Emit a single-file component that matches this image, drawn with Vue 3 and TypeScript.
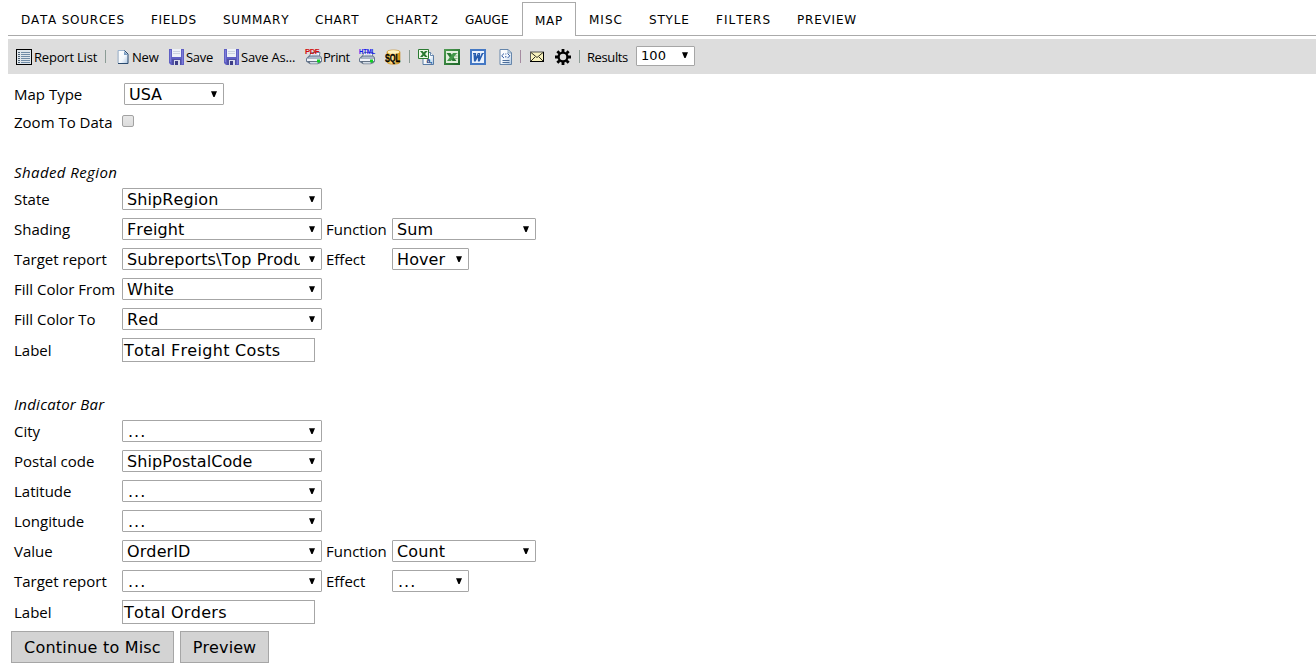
<script setup lang="ts">
interface Field {
  label: string
  value: string
  kind?: 'input'
  extra?: { label: string; value: string; narrow?: boolean }
}

const tabs: { name: string; width: number; spacing: number }[] = [
  { name: 'DATA SOURCES', width: 130, spacing: 0.77 },
  { name: 'FIELDS', width: 72, spacing: 0.7 },
  { name: 'SUMMARY', width: 92, spacing: 0.75 },
  { name: 'CHART', width: 71, spacing: 0.6 },
  { name: 'CHART2', width: 79, spacing: 0.7 },
  { name: 'GAUGE', width: 70, spacing: 0.1 },
  { name: 'MAP', width: 54, spacing: 0.7 },
  { name: 'MISC', width: 60, spacing: 1 },
  { name: 'STYLE', width: 67, spacing: 0.8 },
  { name: 'FILTERS', width: 81, spacing: 1 },
  { name: 'PREVIEW', width: 86, spacing: 0.8 },
]
const activeTab = 'MAP'

const shaded: Field[] = [
  { label: 'State', value: 'ShipRegion' },
  { label: 'Shading', value: 'Freight', extra: { label: 'Function', value: 'Sum' } },
  { label: 'Target report', value: 'Subreports\\Top Products', extra: { label: 'Effect', value: 'Hover', narrow: true } },
  { label: 'Fill Color From', value: 'White' },
  { label: 'Fill Color To', value: 'Red' },
  { label: 'Label', value: 'Total Freight Costs', kind: 'input' },
]
const indicator: Field[] = [
  { label: 'City', value: '...' },
  { label: 'Postal code', value: 'ShipPostalCode' },
  { label: 'Latitude', value: '...' },
  { label: 'Longitude', value: '...' },
  { label: 'Value', value: 'OrderID', extra: { label: 'Function', value: 'Count' } },
  { label: 'Target report', value: '...', extra: { label: 'Effect', value: '...', narrow: true } },
  { label: 'Label', value: 'Total Orders', kind: 'input' },
]
const sections = [
  { title: 'Shaded Region', fields: shaded },
  { title: 'Indicator Bar', fields: indicator },
]
</script>

<template>
  <div class="page">
    <svg class="defs" width="0" height="0" aria-hidden="true">
      <defs>
        <linearGradient id="paper" x1="0" y1="0" x2="1" y2="1">
          <stop offset="0" stop-color="#fff" /><stop offset=".55" stop-color="#f3f8fd" /><stop offset="1" stop-color="#a9c3df" />
        </linearGradient>
        <linearGradient id="gold" x1="0" x2="1">
          <stop offset="0" stop-color="#e8a81c" /><stop offset=".4" stop-color="#ffe9a0" /><stop offset="1" stop-color="#d58a00" />
        </linearGradient>
        <linearGradient id="green" x1="0" x2="1" y2="1">
          <stop offset="0" stop-color="#4d9a50" /><stop offset="1" stop-color="#1e692a" />
        </linearGradient>
        <symbol id="floppy" viewBox="0 0 16 16">
          <path d="M0 0h15v16H2l-2-2z" fill="#5f5fc4" />
          <path d="M1 1h1v12H1zM13 1h1v14h-1z" fill="#7d7dd8" />
          <path d="M3 0h9v8H3z" fill="#eef1f7" />
          <path d="M4 2h7v1H4zM4 4h7v1H4z" fill="#cbd1df" />
          <path d="M3 10h9v6H3z" fill="#5050a4" />
          <path d="M5 11h6v5H5z" fill="#d9dcec" />
          <path d="M6 12h3v4H6z" fill="#3d3d86" />
        </symbol>
        <symbol id="printer" viewBox="0 0 16 16">
          <path d="M5 4h9l-1 5H3z" fill="#f6f9fd" stroke="#62758f" stroke-width=".9" />
          <path d="M6 6.5h6" stroke="#adb9c9" stroke-width=".7" />
          <path d="M0 10l3-3h11l2 2v4l-2 2H3l-3-2z" fill="#66788f" />
          <path d="M2 9.5L4 8h10l1 1.5z" fill="#aebccd" />
          <path d="M1 10h14v2.5H1z" fill="#f0f3f8" />
          <path d="M3 13h10l-1 2.5H4z" fill="#d5dee8" stroke="#4c5a6d" stroke-width=".7" />
          <path d="M11 11h3v3h-3z" fill="#13ce25" />
        </symbol>
        <symbol id="arrow" viewBox="0 0 6 6">
          <path d="M0 .2h6L3.6 6H2.4z" fill="#000" />
        </symbol>
      </defs>
    </svg>

    <nav class="tabs">
      <a
        v-for="t in tabs" :key="t.name" class="tab" :class="{ active: t.name === activeTab }"
        :style="{ width: t.width + 'px', letterSpacing: t.spacing + 'px' }"
      >{{ t.name }}</a>
    </nav>

    <div class="toolbar">
      <div class="tool report">
        <svg width="16" height="16" viewBox="0 0 16 16">
          <rect x=".5" y=".5" width="15" height="15" fill="#dfe6ec" stroke="#000" />
          <path d="M2 3h2v1H2zM2 5h2v1H2zM2 7h2v1H2zM2 9h2v1H2zM2 11h2v1H2zM2 13h2v1H2z" fill="#4d6275" />
          <path d="M5 3h9v1H5zM5 5h9v1H5zM5 7h9v1H5zM5 9h9v1H5zM5 11h9v1H5zM5 13h9v1H5z" fill="#6f8ba6" />
        </svg><span>Report List</span>
      </div>
      <i class="sep s1"></i>
      <div class="tool new">
        <svg width="16" height="16" viewBox="0 0 16 16">
          <path d="M3 1.5h6.5L12 5v9.5H3z" fill="url(#paper)" />
          <path d="M2 14V1.5h7" fill="none" stroke="#9db5d0" />
          <path d="M8.5 1.5L12 5V14.5H2" fill="none" stroke="#29496e" />
          <path d="M8 2v4h4z" fill="#7ea0c4" />
        </svg><span>New</span>
      </div>
      <div class="tool save"><svg width="16" height="16"><use href="#floppy" /></svg><span>Save</span></div>
      <div class="tool saveas"><svg width="16" height="16"><use href="#floppy" /></svg><span>Save As...</span></div>
      <div class="tool print">
        <svg class="over" width="17" height="18" viewBox="0 0 17 18">
          <use href="#printer" x="1" y="1.5" width="16" height="16" />
          <text x="0" y="6.5" textLength="14" lengthAdjust="spacingAndGlyphs" font-size="8" font-weight="bold" font-family="Liberation Sans, sans-serif" fill="#d20b0b">PDF</text>
        </svg><span>Print</span>
      </div>
      <div class="tool html">
        <svg class="over" width="17" height="18" viewBox="0 0 17 18">
          <use href="#printer" x="0" y="1.5" width="16" height="16" />
          <text x="0" y="6.5" textLength="16" lengthAdjust="spacingAndGlyphs" font-size="8" font-weight="bold" font-family="Liberation Sans, sans-serif" fill="#1414ee">HTML</text>
        </svg>
      </div>
      <div class="tool sql">
        <svg class="spill" width="16" height="16" viewBox="0 0 16 16">
          <path d="M2 3C2 .3 15 .3 15 3v10c0 3-13 3-13 0z" fill="url(#gold)" stroke="#c38419" stroke-width=".6" />
          <ellipse cx="8.5" cy="3" rx="6" ry="1.8" fill="#fff2bd" />
          <text x="0" y="12.5" textLength="15" lengthAdjust="spacingAndGlyphs" font-size="10.5" font-weight="bold" font-family="Liberation Sans, sans-serif" fill="#000" stroke="#000" stroke-width=".3">SQL</text>
        </svg>
      </div>
      <i class="sep s2"></i>
      <div class="tool csv">
        <svg width="16" height="16" viewBox="0 0 16 16">
          <path d="M5 3.5h7.5l3 3v9H5z" fill="url(#paper)" stroke="#496f9c" stroke-width=".9" />
          <path d="M12.5 3.5v3h3" fill="#fff" stroke="#496f9c" stroke-width=".8" />
          <path d="M.5.5h10v9H.5z" fill="#eef8e9" stroke="#2b7a32" />
          <path d="M2 2h2.6l5 6H7zM7 2h2.6l-5 6H2z" fill="#2b7a32" />
          <text x="8.5" y="13.5" font-size="7" font-weight="bold" font-family="Liberation Sans, sans-serif" fill="#173e7c">a,</text>
        </svg>
      </div>
      <div class="tool xls">
        <svg width="16" height="16" viewBox="0 0 16 16">
          <rect x="1" y="1" width="14" height="14" fill="#e3f0df" stroke="url(#green)" stroke-width="2" />
          <path d="M11 4.5h2.5M11 7h2.5M11 9.5h2.5" stroke="#8dbb88" />
          <path d="M2.5 4h4l6 8h-4z" fill="#2b7b33" /><path d="M9 4h4L7 12H3z" fill="#429849" />
        </svg>
      </div>
      <div class="tool doc">
        <svg width="16" height="16" viewBox="0 0 16 16">
          <rect x="1" y="1" width="14" height="14" fill="#eaf2fd" stroke="#4478c4" stroke-width="2" />
          <path d="M3 4.5h2.5L5.2 11l3-6.5h1.3L9.2 11l3-6.5h1.6M4 4.5L4.5 12h.8l3-6 .2 6h.8l3.4-7.5" fill="none" stroke="#265cae" stroke-width="1.2" />
        </svg>
      </div>
      <div class="tool xml">
        <svg width="16" height="16" viewBox="0 0 16 16">
          <path d="M2 .5h8L13.5 4v11.5H2z" fill="url(#paper)" stroke="#6686ab" />
          <path d="M10 .5V4h3.5z" fill="#d9e7f5" stroke="#6686ab" stroke-width=".7" />
          <path d="M6 4.5L3.7 6.8 6 9.1M9.5 4.5l2.3 2.3-2.3 2.3" fill="none" stroke="#325aa0" />
          <path d="M7.8 4.5v1M7.8 7v1.5" stroke="#325aa0" />
          <path d="M4.5 11.5h7M4.5 13.5h7" stroke="#4d6e9a" />
        </svg>
      </div>
      <i class="sep s3"></i>
      <div class="tool mail">
        <svg width="16" height="16" viewBox="0 0 16 16">
          <rect x="1.5" y="3" width="13" height="9.5" fill="#f8f2bd" stroke="#555" />
          <path d="M2 3.5l6 5 6-5M2 12l4-4M14 12l-4-4" fill="none" stroke="#302f20" stroke-width="1" />
          <path d="M1 12.5h14M14.5 3v10" stroke="#000" />
        </svg>
      </div>
      <div class="tool gear">
        <svg width="16" height="16" viewBox="0 0 16 16">
          <circle cx="8" cy="8" r="4.4" fill="none" stroke="#000" stroke-width="2.3" />
          <path d="M8 0v3M8 13v3M0 8h3M13 8h3M2.35 2.35l2 2M11.65 11.65l2 2M2.35 13.65l2-2M11.65 4.35l2-2" stroke="#000" stroke-width="2.8" />
        </svg>
      </div>
      <i class="sep s4"></i>
      <span class="results">Results</span>
      <div class="select small"><span>100</span><svg class="arr" width="6" height="6"><use href="#arrow" /></svg></div>
    </div>

    <main class="form">
      <div class="row">
        <label class="lbl">Map Type</label>
        <div class="select usa"><span>USA</span><svg class="arr" width="6" height="6"><use href="#arrow" /></svg></div>
      </div>
      <div class="row zoom">
        <label class="lbl">Zoom To Data</label>
        <div class="check" role="checkbox" aria-checked="false"></div>
      </div>

      <section v-for="s in sections" :key="s.title">
        <h3>{{ s.title }}</h3>
        <div v-for="f in s.fields" :key="f.label" class="row" :class="{ tall: f.kind === 'input' }">
          <label class="lbl">{{ f.label }}</label>
          <div v-if="f.kind === 'input'" class="input">{{ f.value }}</div>
          <div v-else class="select"><span :class="{ dots: f.value === '...' }">{{ f.value }}</span><svg class="arr" width="6" height="6"><use href="#arrow" /></svg></div>
          <template v-if="f.extra">
            <label class="lbl2">{{ f.extra.label }}</label>
            <div class="select" :class="f.extra.narrow ? 'narrow' : 'mid'"><span :class="{ dots: f.extra.value === '...' }">{{ f.extra.value }}</span><svg class="arr" width="6" height="6"><use href="#arrow" /></svg></div>
          </template>
        </div>
      </section>

      <div class="actions">
        <button class="wide">Continue to Misc</button>
        <button>Preview</button>
      </div>
    </main>
  </div>
</template>

<style>
body { background: #fff; overflow: hidden; }
</style>

<style scoped>
.page { height: 669px; padding-left: 8px; color: #000; font-family: "Open Sans", "Noto Sans", sans-serif; overflow: hidden; white-space: nowrap; font-kerning: none; }
.page, .page * { box-sizing: border-box; }
.defs { display: block; }
svg { display: block; flex: none; }

.tabs { display: flex; height: 36px; padding-top: 2px; border-bottom: 1px solid #aaa; font: 12px/36px "DejaVu Sans", sans-serif; font-kerning: none; }
.tab { padding-left: 13px; height: 34px; flex: none; }
.tab.active { border: 1px solid #aaa; border-bottom: 0; background: #fff; padding-left: 12px; }

.toolbar { display: flex; align-items: center; height: 35px; margin-top: 3px; padding-left: 8px; background: #ddd; font-size: 13px; letter-spacing: -.2px; }
.tool { display: flex; align-items: center; gap: 2px; height: 18px; flex: none; }
.report { width: 89px; }
.new { width: 53px; gap: 0; }
.save { width: 55px; gap: 1px; letter-spacing: -.3px; }
.saveas { width: 81px; gap: 1px; }
.print { width: 54px; gap: 1px; letter-spacing: -.5px; }
.html { width: 26px; }
.sql { width: 24px; }
.csv, .xls { width: 26px; }
.doc { width: 28px; }
.xml { width: 22px; }
.mail { width: 26px; }
.gear { width: 24px; }
.over { position: relative; top: -1px; overflow: visible; }
.spill { overflow: visible; }
.sep { width: 1px; height: 13px; background: #8b9c95; flex: none; }
.s1 { margin-right: 10px; }
.s2 { margin-right: 8px; }
.s3 { margin-right: 8px; background: #a58ba0; }
.s4 { margin-right: 7px; }
.results { width: 49px; letter-spacing: -.4px; }

.select { display: flex; align-items: center; width: 200px; height: 22px; flex: none; padding: 0 6px 0 4px; border: 1px solid #a6a6a6; border-radius: 1px; background: #fff; font: 16px/20px "DejaVu Sans", sans-serif; font-kerning: none; letter-spacing: .1px; }
.select span { flex: 1; min-width: 0; overflow: hidden; margin-right: 9px; padding-top: 1px; }
.select .arr { position: relative; top: -.5px; }
.select .dots { letter-spacing: 1px; padding-left: 1px; }
.select.usa { width: 100px; margin-left: 2px; }
.select.mid { width: 144px; }
.select.narrow { width: 77px; }
.select.small { width: 59px; height: 20px; font-size: 13px; line-height: 18px; padding-right: 6px; position: relative; top: -1px; }
.select.small span { margin-right: 0; }

.form { padding-top: 5px; }
.row { display: flex; align-items: center; height: 30px; padding-left: 6px; font-size: 15px; line-height: 20px; }
.row.tall { height: 32px; }
.row.zoom { height: 26px; }
.lbl { width: 108px; flex: none; }
.lbl2 { width: 66px; margin-left: 4px; flex: none; }
.check { width: 12px; height: 12px; border: 1px solid #a2a2a2; border-radius: 2px; background: linear-gradient(#e8e8e8, #dcdcdc); margin-top: -2px; }
h3 { margin: 25px 0 0; padding-left: 6px; height: 24px; font: italic 400 15px/24px "Open Sans", "Noto Sans", sans-serif; letter-spacing: .4px; }
section + section h3 { margin-top: 26px; letter-spacing: .25px; }
.input { width: 193px; height: 24px; border: 1px solid #a6a6a6; padding-left: 1px; font: 16px/24px "DejaVu Sans", sans-serif; font-kerning: none; letter-spacing: .3px; }
.actions { display: flex; gap: 6px; padding: 3px 0 0 3px; }
button { width: 89px; height: 32px; padding: 0; border: 1px solid #a6a6a6; border-radius: 0; background: #d3d3d3; color: #000; font: 16px/32px "DejaVu Sans", sans-serif; font-kerning: none; letter-spacing: .1px; }
button.wide { width: 163px; letter-spacing: .2px; }
</style>
